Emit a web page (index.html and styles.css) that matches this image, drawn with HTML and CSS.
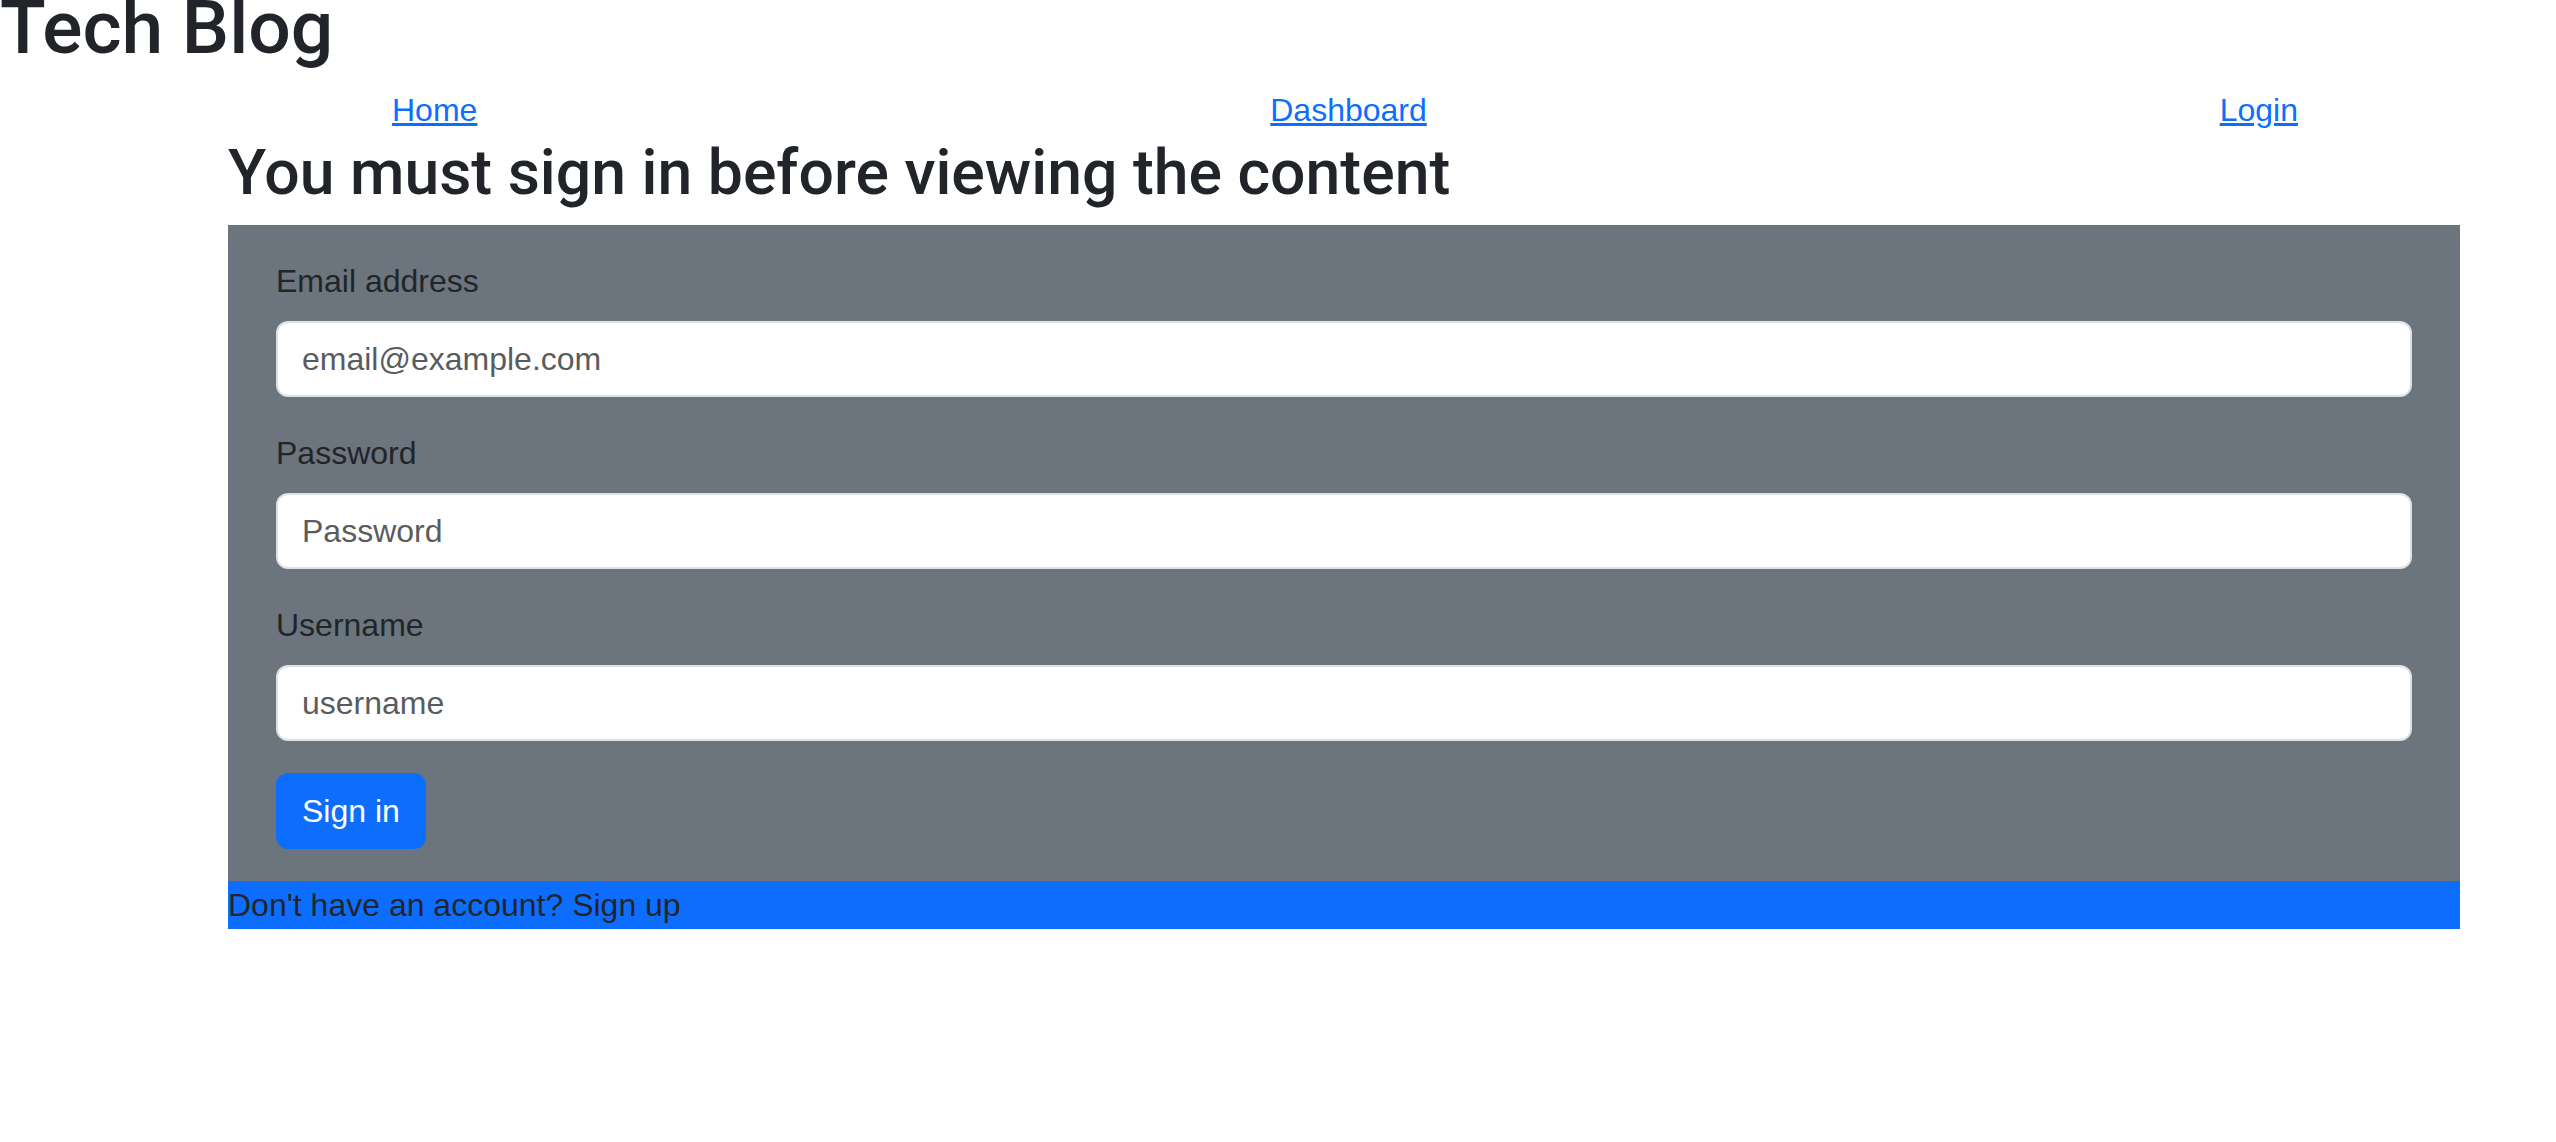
FILE: index.html
```html
<!DOCTYPE html>
<html lang="en">
<head>
    <meta charset="UTF-8">
    <meta name="viewport" content="width=device-width, initial-scale=1.0">
    <title>Tech Blog - Login</title>
    <link rel="stylesheet" href="styles.css">
</head>
<body>
    <header class="site-header">
        <h1 class="site-title">Tech Blog</h1>
    </header>

    <div class="container">
        <nav class="site-nav">
            <a href="#">Home</a>
            <a href="#">Dashboard</a>
            <a href="#">Login</a>
        </nav>

        <h2 class="page-title">You must sign in before viewing the content</h2>

        <form class="login-form" id="loginForm">
            <div class="field">
                <label for="email">Email address</label>
                <input type="email" id="email" name="email" placeholder="email@example.com">
            </div>
            <div class="field">
                <label for="password">Password</label>
                <input type="password" id="password" name="password" placeholder="Password">
            </div>
            <div class="field">
                <label for="username">Username</label>
                <input type="text" id="username" name="username" placeholder="username">
            </div>
            <button type="submit">Sign in</button>
        </form>

        <p class="signup-note">Don't have an account? Sign up</p>
    </div>
</body>
</html>
```

FILE: styles.css
```css
/* page */
body {
    font-family: "Liberation Sans", Arial, sans-serif;
    font-size: 32px;
    line-height: 1.5;
    color: #212529;
    background-color: #fff;
    margin: 0;
    padding: 0;
}

.site-header {
    margin-top: -18px;
}

.site-title {
    font-family: Roboto, "Liberation Sans", sans-serif;
    font-size: 75px;
    font-weight: 500;
    line-height: 1.2;
    margin: 0 0 14px 0;
}

.container {
    margin: 0 96px 0 228px;
}

/* nav */
.site-nav {
    display: flex;
    justify-content: space-between;
    padding: 0 162px 0 164px;
}

.site-nav a {
    color: #0d6efd;
    text-decoration: underline;
}

.page-title {
    font-family: Roboto, "Liberation Sans", sans-serif;
    font-size: 62.5px;
    font-weight: 500;
    line-height: 1.2;
    margin: 1px 0 15px 0;
}

/* form */
.login-form {
    background-color: #6c757d;
    padding: 32px 48px;
}

.field {
    margin-bottom: 32px;
}

label {
    display: block;
    margin-bottom: 16px;
}

input[type="email"],
input[type="password"],
input[type="text"] {
    display: block;
    width: 100%;
    box-sizing: border-box;
    font-family: inherit;
    font-size: 32px;
    line-height: 48px;
    padding: 12px 24px;
    color: #212529;
    background-color: #fff;
    border: 2px solid #dee2e6;
    border-radius: 12px;
}

input::placeholder {
    color: #595c5f;
    opacity: 1;
}

button {
    font-family: inherit;
    font-size: 32px;
    line-height: 48px;
    padding: 12px 24px;
    color: #fff;
    background-color: #0d6efd;
    border: 2px solid #0d6efd;
    border-radius: 12px;
    cursor: pointer;
}

.signup-note {
    margin: 0;
    background-color: #0d6efd;
}
```
